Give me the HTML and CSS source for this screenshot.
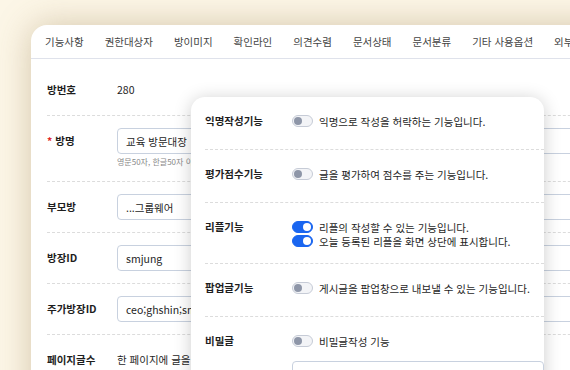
FILE: index.html
```html
<!DOCTYPE html>
<html lang="ko">
<head>
    <meta charset="UTF-8">
    <meta name="viewport" content="width=device-width, initial-scale=1.0">
    <title>게시방 설정</title>
    <link rel="stylesheet" href="styles.css">
</head>
<body>
    <div class="card">
        <nav class="tabs">
            <span>기능사항</span>
            <span>권한대상자</span>
            <span>방이미지</span>
            <span>확인라인</span>
            <span>의견수렴</span>
            <span>문서상태</span>
            <span>문서분류</span>
            <span>기타 사용옵션</span>
            <span>외부공개</span>
        </nav>

        <div class="form">
            <div class="row first">
                <div class="label">방번호</div>
                <div class="value">280</div>
            </div>
            <div class="row">
                <div class="label"><span class="req">*</span>방명</div>
                <div class="value">
                    <input class="field" type="text" value="교육 방문대장">
                    <div class="help">영문50자, 한글50자 이내</div>
                </div>
            </div>
            <div class="row">
                <div class="label">부모방</div>
                <div class="value"><input class="field" type="text" value="...그룹웨어"></div>
            </div>
            <div class="row">
                <div class="label">방장ID</div>
                <div class="value"><input class="field" type="text" value="smjung"></div>
            </div>
            <div class="row">
                <div class="label">주가방장ID</div>
                <div class="value"><input class="field" type="text" value="ceo;ghshin;smjung"></div>
            </div>
            <div class="row">
                <div class="label">페이지글수</div>
                <div class="value">한 페이지에 글을 20개씩 보여줍니다.</div>
            </div>
        </div>

        <!-- 기능사항 팝업 -->
        <div class="popup">
            <div class="opt-row">
                <div class="opt-label">익명작성기능</div>
                <div class="opts">
                    <div class="opt"><span class="toggle"></span>익명으로 작성을 허락하는 기능입니다.</div>
                </div>
            </div>
            <div class="opt-row">
                <div class="opt-label">평가점수기능</div>
                <div class="opts">
                    <div class="opt"><span class="toggle"></span>글을 평가하여 점수를 주는 기능입니다.</div>
                </div>
            </div>
            <div class="opt-row">
                <div class="opt-label">리플기능</div>
                <div class="opts">
                    <div class="opt"><span class="toggle on"></span>리플의 작성할 수 있는 기능입니다.</div>
                    <div class="opt"><span class="toggle on"></span>오늘 등록된 리플을 화면 상단에 표시합니다.</div>
                </div>
            </div>
            <div class="opt-row">
                <div class="opt-label">팝업글기능</div>
                <div class="opts">
                    <div class="opt"><span class="toggle"></span>게시글을 팝업창으로 내보낼 수 있는 기능입니다.</div>
                </div>
            </div>
            <div class="opt-row last">
                <div class="opt-label">비밀글</div>
                <div class="opts">
                    <div class="opt"><span class="toggle"></span>비밀글작성 기능</div>
                    <input class="field pw" type="text">
                </div>
            </div>
        </div>
    </div>
</body>
</html>
```

FILE: styles.css
```css
html, body {
    margin: 0;
    padding: 0;
    height: 370px;
    overflow: hidden;
}
body {
    background: #fcf6e7;
    font-family: "Noto Sans CJK KR", "Noto Sans", sans-serif;
    font-size: 10.5px;
    color: #1e1e1e;
}
.card {
    position: relative;
    margin: 25px 0 0 31px;
    width: 640px;
    height: 400px;
    background: #fff;
    border-radius: 16px 0 0 0;
    box-shadow: 0 0 34px rgba(150, 120, 70, 0.38);
}
.tabs {
    display: flex;
    gap: 21px;
    height: 33px;
    align-items: center;
    padding-left: 14px;
    border-bottom: 1px solid #dfe2eb;
    white-space: nowrap;
    color: #444;
}
.form {
    padding: 6px 0 0 16px;
}
.row {
    display: flex;
    align-items: flex-start;
    padding: 12px 0;
    border-bottom: 1px dashed #dcdcdc;
}
.label {
    width: 70px;
    flex: none;
    height: 26px;
    line-height: 26px;
    font-weight: bold;
}
.req {
    color: #e0262b;
    margin-right: 3px;
}
.value {
    min-height: 26px;
    line-height: 26px;
}
.field {
    display: block;
    box-sizing: border-box;
    width: 500px;
    height: 26px;
    padding: 0 8px;
    border: 1px solid #c8d1df;
    border-radius: 4px;
    font-family: inherit;
    font-size: 10.5px;
    color: #1e1e1e;
    background: #fff;
}
.help {
    font-size: 8px;
    line-height: 14px;
    margin-top: 1px;
    color: #888;
}
.popup {
    position: absolute;
    left: 160px;
    top: 72px;
    width: 353px;
    height: 300px;
    background: #fff;
    border-radius: 14px;
    box-shadow: 0 2px 18px rgba(0, 0, 0, 0.2);
}
.opt-row {
    display: flex;
    margin-left: 14px;
    padding: 17px 0 15px;
    border-bottom: 1px dashed #dcdcdc;
}
.opt-row.last {
    border-bottom: none;
}
.opt-label {
    width: 87px;
    flex: none;
    line-height: 14px;
    font-weight: bold;
}
.opts {
    min-height: 20px;
}
.opt {
    display: flex;
    align-items: center;
    height: 14px;
    white-space: nowrap;
}
.toggle {
    position: relative;
    box-sizing: border-box;
    width: 21px;
    height: 12px;
    margin-right: 6px;
    border: 1px solid #c6cbd6;
    border-radius: 6px;
    background: #f3f4f7;
}
.toggle::after {
    content: "";
    position: absolute;
    left: 1px;
    top: 1px;
    width: 8px;
    height: 8px;
    border-radius: 50%;
    background: #8e96a8;
}
.toggle.on {
    border-color: #1a66f0;
    background: #1a66f0;
}
.toggle.on::after {
    left: auto;
    right: 1px;
    background: #fff;
}
.field.pw {
    margin-top: 13px;
    width: 252px;
}
```
